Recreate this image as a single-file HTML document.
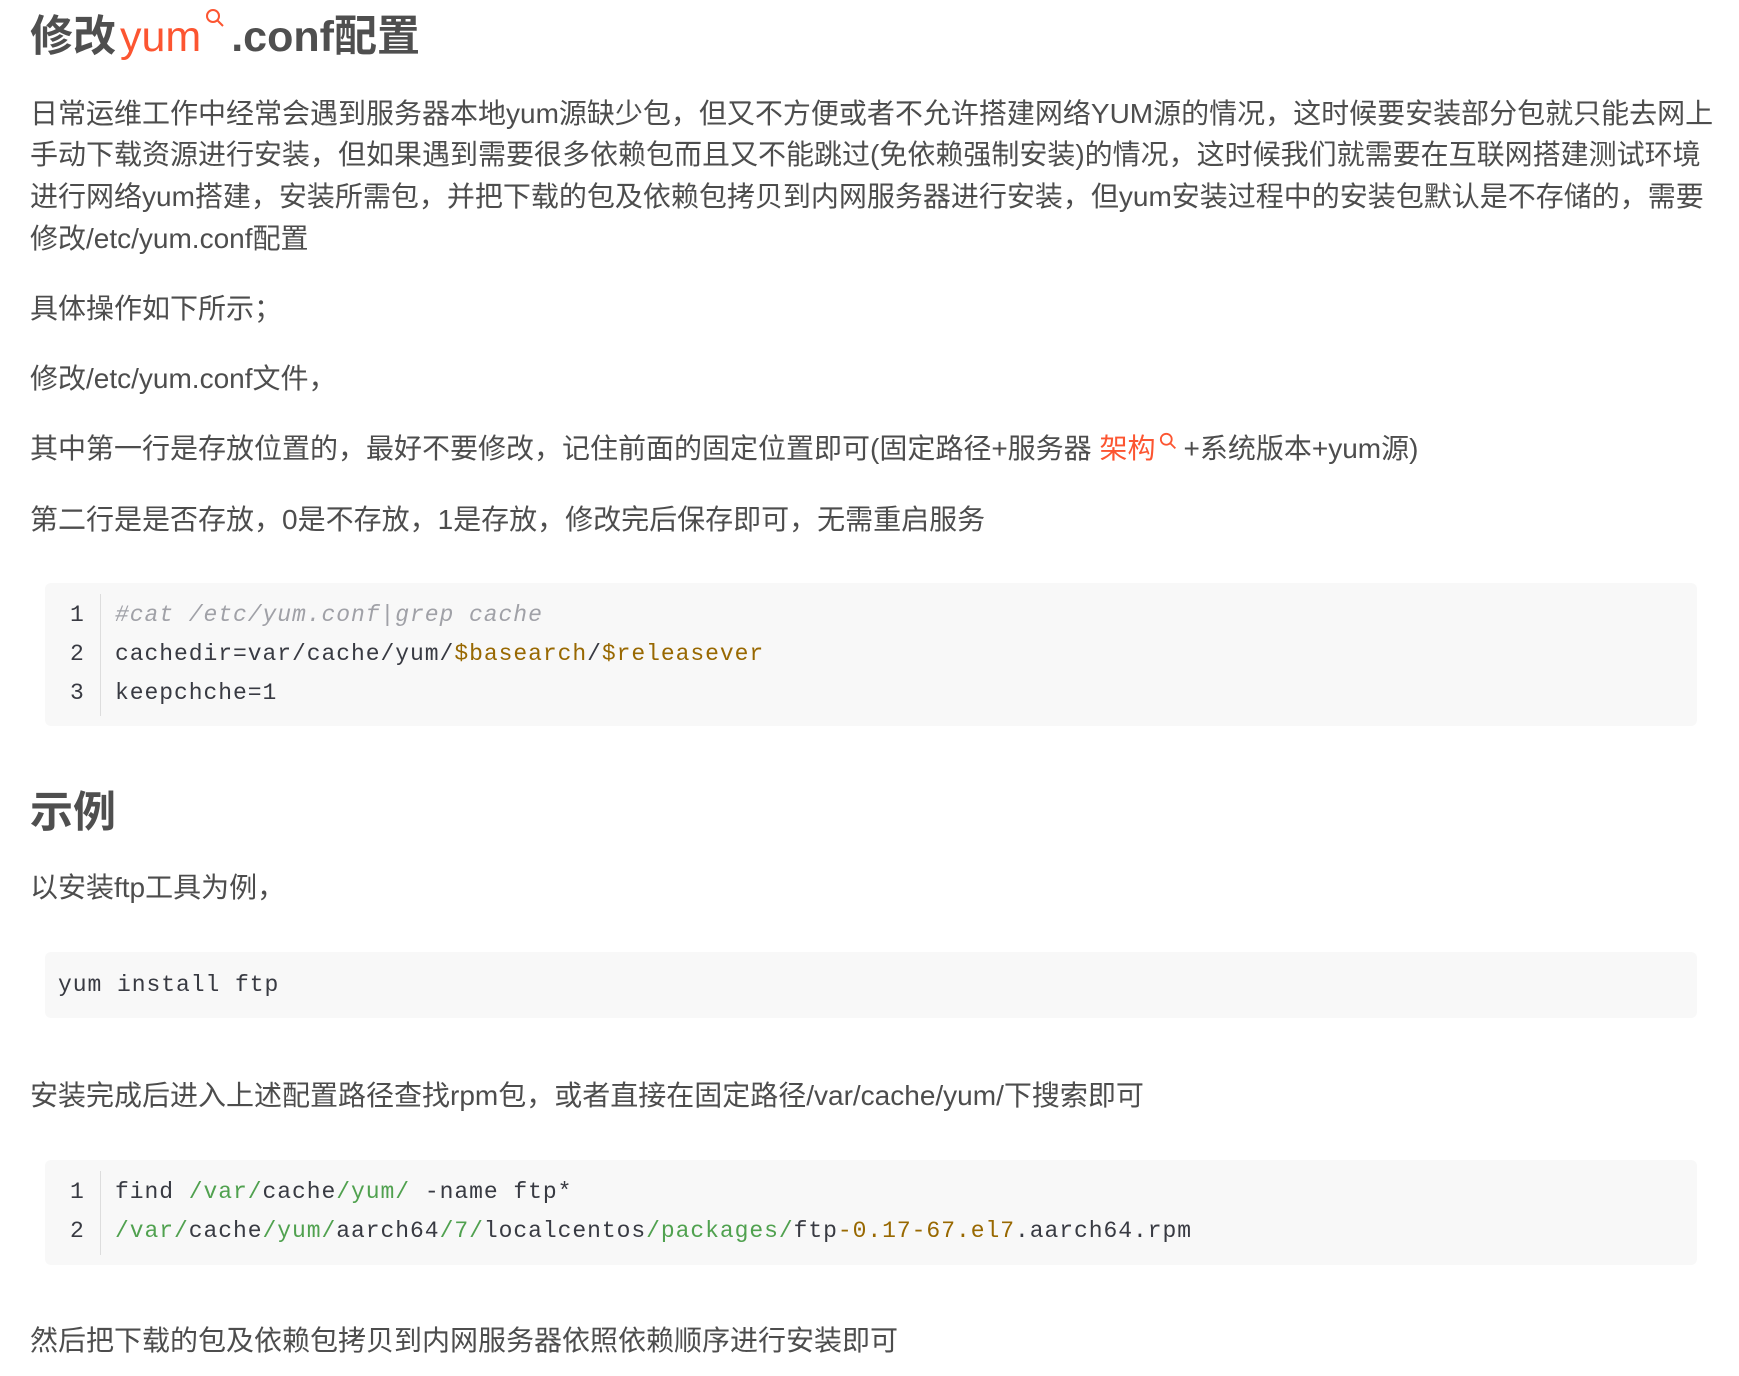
<!DOCTYPE html>
<html><head><meta charset="utf-8"><style>
body{margin:0;width:1739px;height:1376px;background:#fff;position:relative;overflow:hidden;font-family:"Liberation Sans","Noto Sans CJK SC",sans-serif;color:#4d4d4d}
.t{position:absolute;left:30px;white-space:nowrap;font-size:28px;line-height:42px}
h1,h2{position:absolute;left:30px;margin:0;font-size:43px;font-weight:bold;color:#4f4f4f;line-height:50px;white-space:nowrap}
.o{color:#fc5531}
.cb{position:absolute;left:45px;width:1652px;background:#f8f8f8;border-radius:6px}
.c{position:absolute;font-family:"Liberation Mono","DejaVu Sans Mono",monospace;font-size:23px;letter-spacing:0.95px;white-space:nowrap;color:#383a42;line-height:38px}
.n{position:absolute;left:70px;font-family:"Liberation Mono",monospace;font-size:23px;color:#383a42;line-height:38px}
.bar{position:absolute;left:100px;width:1px;background:#ddd}
.cm{color:#a0a1a7;font-style:italic}.y{color:#986801}.g{color:#50a14f}
svg.i{display:inline-block;vertical-align:top}
</style></head><body>
<h1 style="top:12px">修改<span class="o" style="font-weight:normal;margin-left:4px">yum</span><svg class="i" style="margin:-4px 4px 0 4px" width="22" height="22" viewBox="0 0 22 22"><circle cx="8" cy="8" r="6" fill="none" stroke="#fc5531" stroke-width="2"/><line x1="12.5" y1="12.5" x2="18" y2="18" stroke="#fc5531" stroke-width="2"/></svg>.conf配置</h1>
<div class="t" style="top:93px">日常运维工作中经常会遇到服务器本地yum源缺少包，但又不方便或者不允许搭建网络YUM源的情况，这时候要安装部分包就只能去网上</div>
<div class="t" style="top:134px">手动下载资源进行安装，但如果遇到需要很多依赖包而且又不能跳过(免依赖强制安装)的情况，这时候我们就需要在互联网搭建测试环境</div>
<div class="t" style="top:176px">进行网络yum搭建，安装所需包，并把下载的包及依赖包拷贝到内网服务器进行安装，但yum安装过程中的安装包默认是不存储的，需要</div>
<div class="t" style="top:218px">修改/etc/yum.conf配置</div>
<div class="t" style="top:288px">具体操作如下所示；</div>
<div class="t" style="top:358px">修改/etc/yum.conf文件，</div>
<div class="t" style="top:428px">其中第一行是存放位置的，最好不要修改，记住前面的固定位置即可(固定路径+服务器 <span class="o">架构</span><svg class="i" style="margin:4px 4px 0 4px" width="20" height="20" viewBox="0 0 22 22"><circle cx="8" cy="8" r="6" fill="none" stroke="#fc5531" stroke-width="2"/><line x1="12.5" y1="12.5" x2="18" y2="18" stroke="#fc5531" stroke-width="2"/></svg>+系统版本+yum源)</div>
<div class="t" style="top:499px">第二行是是否存放，0是不存放，1是存放，修改完后保存即可，无需重启服务</div>
<div class="cb" style="top:583px;height:143px"></div>
<div class="bar" style="top:594px;height:122px"></div>
<div class="n" style="top:596px">1</div><div class="n" style="top:635px">2</div><div class="n" style="top:674px">3</div>
<div class="c" style="left:115px;top:596px"><span class="cm">#cat /etc/yum.conf|grep cache</span></div>
<div class="c" style="left:115px;top:635px">cachedir=var/cache/yum/<span class="y">$basearch</span>/<span class="y">$releasever</span></div>
<div class="c" style="left:115px;top:674px">keepchche=1</div>
<h2 style="top:788px">示例</h2>
<div class="t" style="top:867px">以安装ftp工具为例，</div>
<div class="cb" style="top:952px;height:66px"></div>
<div class="c" style="left:58px;top:966px">yum install ftp</div>
<div class="t" style="top:1075px">安装完成后进入上述配置路径查找rpm包，或者直接在固定路径/var/cache/yum/下搜索即可</div>
<div class="cb" style="top:1160px;height:105px"></div>
<div class="bar" style="top:1171px;height:84px"></div>
<div class="n" style="top:1173px">1</div><div class="n" style="top:1212px">2</div>
<div class="c" style="left:115px;top:1173px">find <span class="g">/var/</span>cache<span class="g">/yum/</span> -name ftp*</div>
<div class="c" style="left:115px;top:1212px"><span class="g">/var/</span>cache<span class="g">/yum/</span>aarch64<span class="g">/7/</span>localcentos<span class="g">/packages/</span>ftp<span class="y">-0.17-67.</span><span class="y">el7</span>.aarch64.rpm</div>
<div class="t" style="top:1320px">然后把下载的包及依赖包拷贝到内网服务器依照依赖顺序进行安装即可</div>
</body></html>
